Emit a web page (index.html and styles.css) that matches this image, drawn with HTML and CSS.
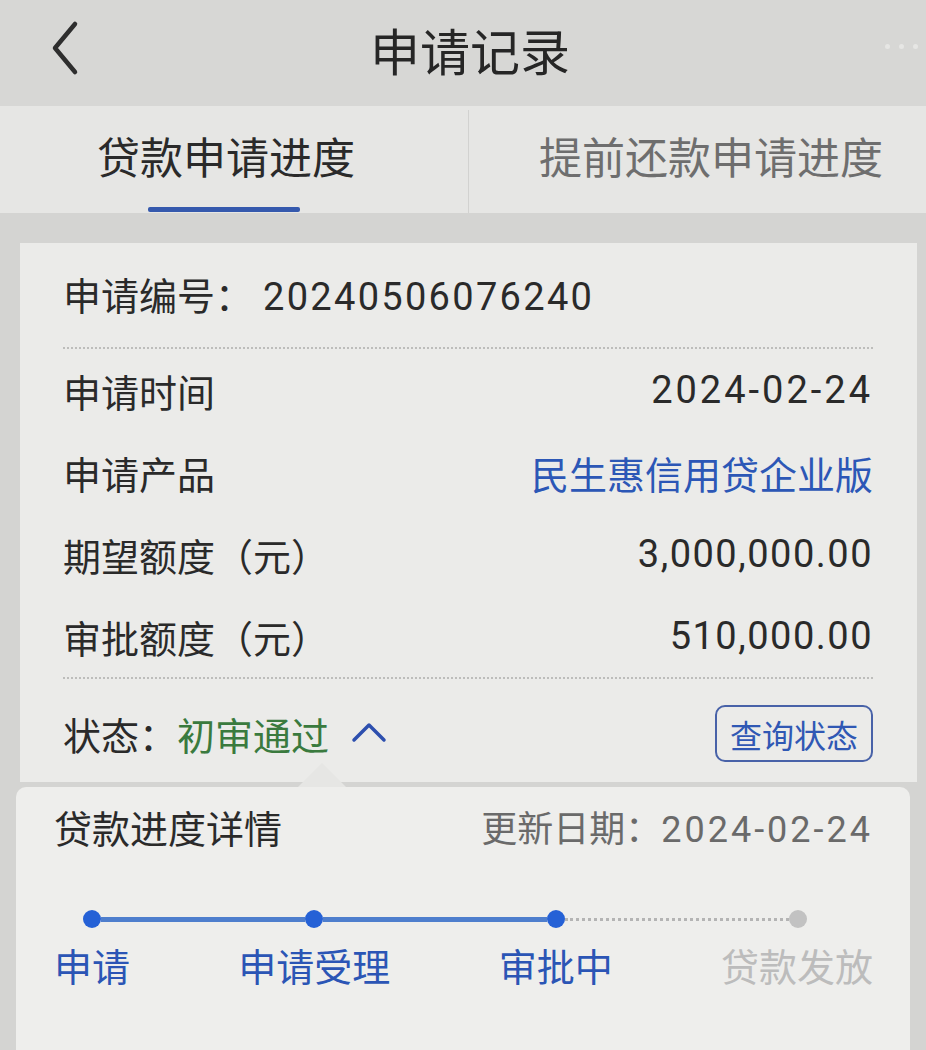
FILE: index.html
```html
<!DOCTYPE html>
<html lang="zh-CN">
<head>
    <meta charset="UTF-8">
    <meta name="viewport" content="width=device-width, initial-scale=1.0">
    <title>申请记录</title>
    <link rel="stylesheet" href="styles.css">
</head>
<body>
    <!-- Top bar -->
    <div class="nav">
        <div class="nav-back">
            <svg width="30" height="56" viewBox="0 0 30 56">
                <polyline points="25,4 5,28 25,52" fill="none" stroke="#2e2e2e" stroke-width="4.5" stroke-linecap="round" stroke-linejoin="round"/>
            </svg>
        </div>
        <h1 class="nav-title">申请记录</h1>
        <div class="nav-more">
            <span></span><span></span><span></span>
        </div>
    </div>

    <!-- Tabs -->
    <div class="tabs">
        <div class="tab active">
            <span class="tab-text">贷款申请进度</span>
            <span class="tab-bar"></span>
        </div>
        <div class="tab">
            <span class="tab-text">提前还款申请进度</span>
        </div>
    </div>

    <div class="page">
        <!-- Application card -->
        <div class="card">
            <div class="card-head">申请编号：<span class="num id-num">20240506076240</span></div>

            <div class="info">
                <div class="info-row">
                    <span>申请时间</span>
                    <span class="num date">2024-02-24</span>
                </div>
                <div class="info-row">
                    <span>申请产品</span>
                    <span class="link">民生惠信用贷企业版</span>
                </div>
                <div class="info-row">
                    <span>期望额度（元）</span>
                    <span class="num">3,000,000.00</span>
                </div>
                <div class="info-row">
                    <span>审批额度（元）</span>
                    <span class="num">510,000.00</span>
                </div>
            </div>

            <div class="status-row">
                <div class="status">
                    状态：<span class="status-ok">初审通过</span>
                    <svg class="caret" width="36" height="22" viewBox="0 0 36 22">
                        <polyline points="3,19 18,4 33,19" fill="none" stroke="#2d4fae" stroke-width="3.5" stroke-linecap="round" stroke-linejoin="round"/>
                    </svg>
                </div>
                <button type="button" class="query-btn">查询状态</button>
            </div>
        </div>

        <!-- Progress detail panel -->
        <div class="detail">
            <div class="detail-head">
                <span class="detail-title">贷款进度详情</span>
                <span class="detail-date">更新日期：<span class="num date">2024-02-24</span></span>
            </div>

            <div class="track">
                <span class="dot"></span>
                <span class="line" style="flex-grow: 204"></span>
                <span class="dot"></span>
                <span class="line" style="flex-grow: 223"></span>
                <span class="dot"></span>
                <span class="line todo" style="flex-grow: 224"></span>
                <span class="dot todo"></span>
            </div>
            <div class="steps">
                <span class="step">申请</span>
                <span class="step">申请受理</span>
                <span class="step">审批中</span>
                <span class="step todo">贷款发放</span>
            </div>
        </div>
    </div>
</body>
</html>
```

FILE: styles.css
```css
body {
    margin: 0;
    padding: 0;
    width: 926px;
    background-color: #d4d4d2;
    font-family: Roboto, "Noto Sans CJK SC", sans-serif;
    color: #2a2a2a;
}
.nav {
    display: grid;
    grid-template-columns: 1fr auto 1fr;
    align-items: center;
    height: 106px;
    background-color: #d7d7d5;
}
.nav-back {
    padding-left: 50px;
    display: flex;
    align-items: center;
    padding-bottom: 10px;
}
.nav-title {
    margin: 0;
    padding-left: 14px;
    padding-bottom: 8px;
    font-size: 50px;
    font-weight: 400;
    color: #262626;
}
.nav-more {
    display: flex;
    justify-content: flex-end;
    gap: 9px;
    padding-right: 8px;
    padding-bottom: 14px;
}
.nav-more span {
    width: 5px;
    height: 5px;
    border-radius: 50%;
    background-color: #e6e6e4;
}
.tabs {
    display: flex;
    height: 107px;
    background-color: #e6e6e4;
}
.tab {
    display: flex;
    flex-direction: column;
    align-items: center;
    box-sizing: border-box;
    padding-top: 23px;
}
.tab.active {
    width: 468px;
    align-items: flex-start;
    padding-left: 97px;
}
.tab + .tab {
    flex: 1;
    align-items: flex-start;
    padding-left: 70px;
    border-left: 1px solid #d2d2d0;
    margin-top: 4px;
    padding-top: 19px;
}
.tab-text {
    font-size: 43px;
    line-height: 60px;
    color: #6e6e6e;
}
.tab.active .tab-text {
    color: #2a2a2a;
}
.tab-bar {
    display: block;
    width: 152px;
    height: 5px;
    margin: 18px 0 0 51px;
    border-radius: 2px;
    background-color: #3559ad;
}
.page {
    padding-top: 30px;
}
.card {
    margin: 0 9px 0 20px;
    padding: 0 44px 0 43px;
    background-color: #ebebe9;
}
.card-head {
    padding: 27px 0 23px;
    line-height: 54px;
    font-size: 38px;
    border-bottom: 2px dotted #bdbdbb;
}
.num {
    letter-spacing: 2px;
}
.id-num {
    margin-left: 10px;
    letter-spacing: 2.3px;
}
.info {
    border-bottom: 2px dotted #bdbdbb;
}
.info-row {
    display: flex;
    justify-content: space-between;
    align-items: center;
    height: 82px;
    font-size: 38px;
}
.info-row .num {
    letter-spacing: 1.5px;
}
.info-row .num.date,
.num.date {
    letter-spacing: 3px;
}
.link {
    color: #2c57b6;
}
.status-row {
    display: flex;
    justify-content: space-between;
    align-items: center;
    padding: 26px 0 20px;
}
.status {
    display: flex;
    align-items: center;
    font-size: 38px;
}
.status-ok {
    color: #3a7a3e;
}
.caret {
    margin-left: 22px;
    margin-top: -4px;
}
.query-btn {
    height: 57px;
    padding: 0 13px;
    border: 2px solid #4862a8;
    border-radius: 10px;
    background-color: transparent;
    color: #3058b4;
    font-family: inherit;
    font-size: 32px;
}
.detail {
    position: relative;
    margin: 5px 16px 0 16px;
    padding: 22px 37px 80px 38px;
    background-color: #eeeeec;
    border-radius: 10px 10px 0 0;
}
.detail::before {
    /* popover arrow pointing at the status toggle */
    content: "";
    position: absolute;
    top: -24px;
    left: 282px;
    border: 24px solid transparent;
    border-top: 0;
    border-bottom-color: #e6e6e4;
}
.detail-head {
    display: flex;
    justify-content: space-between;
    align-items: center;
    line-height: 42px;
}
.detail-title {
    font-size: 38px;
}
.detail-date {
    font-size: 36px;
    color: #6a6a6a;
}
.track {
    display: flex;
    align-items: center;
    margin-top: 59px;
    padding: 0 66px 0 29px;
}
.dot {
    flex: none;
    width: 18px;
    height: 18px;
    border-radius: 50%;
    background-color: #2561d6;
}
.dot.todo {
    background-color: #c2c2c2;
}
.line {
    flex-basis: 0;
    height: 5px;
    background-color: #4e7ecd;
}
.line.todo {
    height: 0;
    border-top: 3px dotted #b4b4b4;
    background: none;
}
.steps {
    display: flex;
    justify-content: space-between;
    margin-top: 17px;
    line-height: 46px;
}
.step {
    font-size: 38px;
    color: #2b55b5;
}
.step.todo {
    color: #bcbcbc;
}
```
